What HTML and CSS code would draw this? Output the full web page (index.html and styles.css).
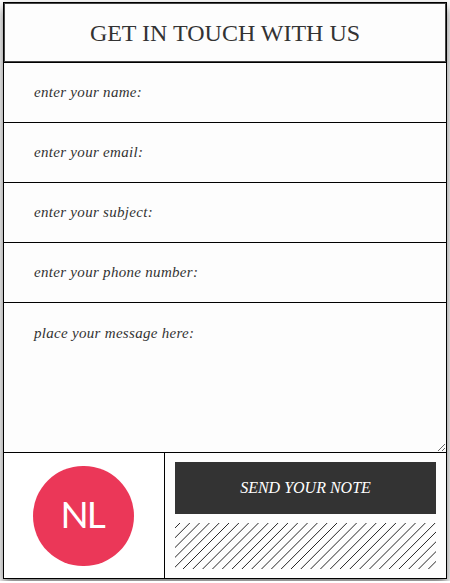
FILE: index.html
```html
<!DOCTYPE html>
<html lang="en">
<head>
<meta charset="utf-8">
<title>Get in touch</title>
<link rel="stylesheet" href="styles.css">
</head>
<body>
<form class="contact">
  <h1 class="title"><span>GET IN TOUCH WITH US</span></h1>
  <input class="field" type="text" placeholder="enter your name:">
  <input class="field" type="email" placeholder="enter your email:">
  <input class="field" type="text" placeholder="enter your subject:">
  <input class="field" type="tel" placeholder="enter your phone number:">
  <textarea class="field message" placeholder="place your message here:"></textarea>
  <div class="footer">
    <div class="brand"><div class="logo"><span>NL</span></div></div>
    <div class="actions">
      <button class="send" type="button">SEND YOUR NOTE</button>
      <div class="stripes"></div>
    </div>
  </div>
</form>
</body>
</html>
```
FILE: styles.css
```css
* { box-sizing: border-box; }
body {
  margin: 0;
  padding: 2px 3px;
  background: #fff;
  overflow: hidden;
  font-family: "Liberation Serif", serif;
}
.contact {
  width: 444px;
  height: 577px;
  border: 1px solid #000;
  background: #fdfdfd;
  box-shadow: 0 5px 10px rgba(0, 0, 0, .55);
}
.title {
  display: flex;
  align-items: center;
  justify-content: center;
  height: 59px;
  margin: 0;
  border: 1px solid #444;
  font-size: 24px;
  font-weight: 400;
  color: #333;
}
.title span { padding-top: 1px; }
.field {
  display: block;
  width: 100%;
  height: 60px;
  padding: 0 30px;
  border: 0;
  border-top: 1px solid #000;
  border-radius: 0;
  outline: 0;
  background: transparent;
  font: italic 15px "Liberation Serif", serif;
  letter-spacing: .3px;
  color: #333;
}
.field::placeholder { color: #333; opacity: 1; }
.message {
  height: 150px;
  padding-top: 22px;
  resize: both;
}
.footer {
  display: flex;
  height: 126px;
  border-top: 1px solid #000;
}
.brand {
  width: 161px;
  padding: 13px 0 0 29.4px;
  border-right: 1px solid #000;
  background: #fff;
}
.logo {
  display: flex;
  align-items: center;
  justify-content: center;
  width: 100.4px;
  height: 100.4px;
  padding: 0 3px 5px 0;
  border-radius: 50%;
  background: #eb3758;
  color: #fff;
  font: 400 37px Lato, sans-serif;
  letter-spacing: -2px;
}
.actions {
  flex: 1;
  padding: 9px 10px;
}
.send {
  display: block;
  width: 100%;
  height: 52px;
  padding: 0;
  border: 0;
  background: #333;
  color: #fff;
  font: italic 16px "Liberation Serif", serif;
}
.stripes {
  height: 46px;
  margin-top: 9px;
  background: repeating-linear-gradient(135deg, transparent 0 2.8px, #222 3.5px, transparent 4.2px 6.94px);
}
```
